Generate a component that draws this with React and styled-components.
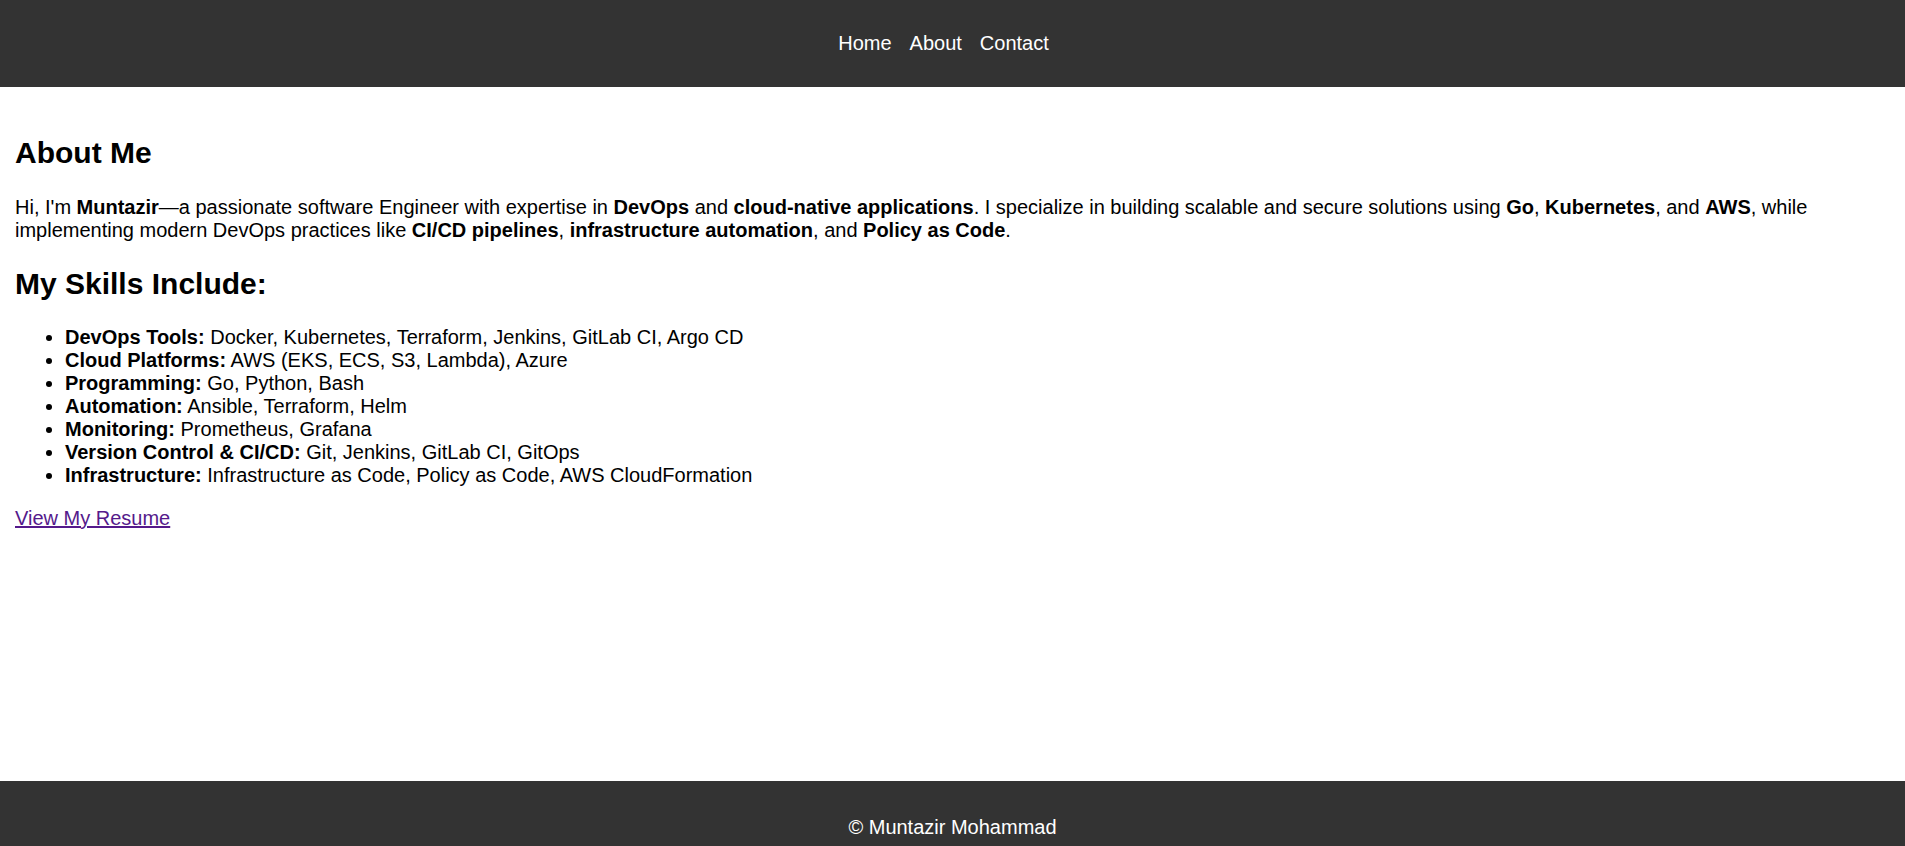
import React from "react";
import styled, { createGlobalStyle } from "styled-components";

const GlobalStyle = createGlobalStyle`
  html, body {
    margin: 0;
    padding: 0;
    background: #ffffff;
  }
  body {
    font-family: "Liberation Sans", Arial, sans-serif;
    font-size: 20px;
    color: #000000;
  }
  * { box-sizing: border-box; }
`;

const Header = styled.header`
  background: #333333;
  color: #ffffff;
  padding: 32px 0;
`;

const NavList = styled.nav`
  display: flex;
  justify-content: center;
  line-height: 23px;
`;

const NavLink = styled.a`
  color: #ffffff;
  text-decoration: none;
  margin-right: 18px;
  font-size: 20px;
`;

const Main = styled.main`
  min-height: 694px;
  padding: 24px 15px;
`;

const Heading = styled.h2`
  font-size: 30px;
  font-weight: bold;
  line-height: 34.5px;
  margin: 25px 0;
`;

const Paragraph = styled.p`
  margin: 20px 0;
  line-height: 23px;
`;

const SkillList = styled.ul`
  margin: 20px 0;
  padding-left: 50px;
  line-height: 23px;
  list-style: disc;
`;

const SkillItem = styled.li``;

const ResumeLink = styled.a`
  display: inline-block;
  margin-top: -3px;
  color: #551a8b;
  text-decoration: underline;
  line-height: 23px;
`;

const Footer = styled.footer`
  background: #333333;
  color: #ffffff;
  text-align: center;
  padding: 35px 0 32px;
  line-height: 23px;
`;

const skills = [
  ["DevOps Tools:", "Docker, Kubernetes, Terraform, Jenkins, GitLab CI, Argo CD"],
  ["Cloud Platforms:", "AWS (EKS, ECS, S3, Lambda), Azure"],
  ["Programming:", "Go, Python, Bash"],
  ["Automation:", "Ansible, Terraform, Helm"],
  ["Monitoring:", "Prometheus, Grafana"],
  ["Version Control & CI/CD:", "Git, Jenkins, GitLab CI, GitOps"],
  ["Infrastructure:", "Infrastructure as Code, Policy as Code, AWS CloudFormation"],
];

export default function App() {
  return (
    <>
      <GlobalStyle />
      <Header>
        <NavList>
          <NavLink href="#">Home</NavLink>
          <NavLink href="#">About</NavLink>
          <NavLink href="#">Contact</NavLink>
        </NavList>
      </Header>
      <Main>
        <Heading>About Me</Heading>
        <Paragraph>
          Hi, I'm <strong>Muntazir</strong>—a passionate software Engineer with expertise in{" "}
          <strong>DevOps</strong> and <strong>cloud-native applications</strong>. I specialize in
          building scalable and secure solutions using <strong>Go</strong>,{" "}
          <strong>Kubernetes</strong>, and <strong>AWS</strong>, while implementing modern DevOps
          practices like <strong>CI/CD pipelines</strong>,{" "}
          <strong>infrastructure automation</strong>, and <strong>Policy as Code</strong>.
        </Paragraph>
        <Heading>My Skills Include:</Heading>
        <SkillList>
          {skills.map(([label, text]) => (
            <SkillItem key={label}>
              <strong>{label}</strong> {text}
            </SkillItem>
          ))}
        </SkillList>
        <ResumeLink href="#">View My Resume</ResumeLink>
      </Main>
      <Footer>© Muntazir Mohammad</Footer>
    </>
  );
}
